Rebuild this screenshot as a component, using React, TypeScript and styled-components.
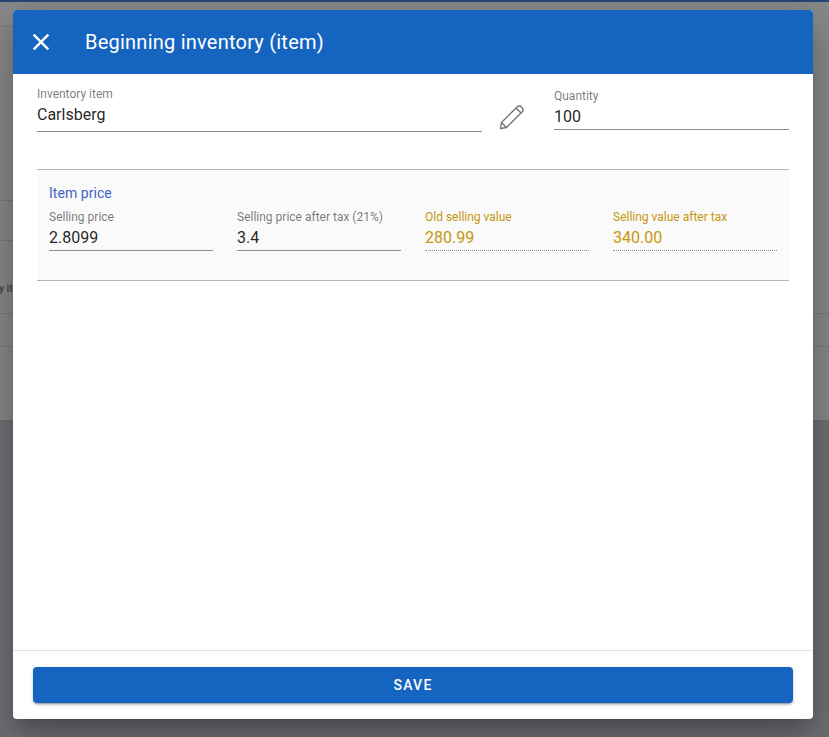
import React from 'react';
import styled, { createGlobalStyle } from 'styled-components';

const Global = createGlobalStyle`
  html, body { margin: 0; padding: 0; height: 100%; overflow: hidden; }
  body { font-family: Roboto, "Liberation Sans", sans-serif; background: #8a8a8a; }
  #root { height: 100%; }
`;

const Page = styled.div`
  position: relative;
  width: 829px;
  height: 737px;
  overflow: hidden;
  background: #8a8a8a;
`;

const Backdrop = styled.div`
  position: absolute;
  inset: 0;
  display: flex;
  flex-direction: column;
`;

const TopStrip = styled.div`
  height: 2px;
  background: #23477a;
`;

const BackdropBody = styled.div`
  height: 418px;
  background: #8a8a8a;
`;

const BackdropLine = styled.div<{ $top: number; $width?: number }>`
  position: absolute;
  left: 0;
  top: ${(p) => p.$top}px;
  width: ${(p) => (p.$width ? `${p.$width}px` : '100%')};
  height: 1px;
  background: #7a7a7a;
`;

const BackdropText = styled.span`
  position: absolute;
  left: -1px;
  top: 283px;
  font-size: 10px;
  font-weight: 700;
  color: #444a52;
  white-space: nowrap;
`;

const BackdropFoot = styled.div`
  flex: 1;
  background: #707175;
`;

const Dialog = styled.div`
  position: absolute;
  left: 13px;
  top: 10px;
  width: 800px;
  height: 709px;
  display: flex;
  flex-direction: column;
  background: #fff;
  border-radius: 4px;
  overflow: hidden;
`;

const DialogShadow = styled.div`
  position: absolute;
  left: 13px;
  top: 10px;
  width: 800px;
  height: 709px;
  border-radius: 4px;
  box-shadow: 0 11px 15px -7px rgba(0,0,0,.2), 0 24px 38px 3px rgba(0,0,0,.14), 0 9px 46px 8px rgba(0,0,0,.12);
`;

const Header = styled.header`
  flex: none;
  height: 64px;
  display: flex;
  align-items: center;
  background: #1565c0;
  color: #fff;
  padding-left: 14px;
`;

const CloseButton = styled.button`
  width: 28px;
  height: 28px;
  padding: 0;
  border: 0;
  background: none;
  color: #fff;
  display: flex;
  align-items: center;
  justify-content: center;
`;

const Title = styled.h1`
  margin: 0 0 0 30px;
  font-size: 20px;
  font-weight: 400;
  line-height: 32px;
  letter-spacing: 0.23px;
`;

const Content = styled.div`
  flex: 1;
  display: flex;
  flex-direction: column;
  padding: 0 24px;
`;

const TopRow = styled.div`
  display: flex;
  align-items: flex-start;
`;

const Field = styled.div<{ $width?: number }>`
  width: ${(p) => (p.$width ? `${p.$width}px` : 'auto')};
`;

const FieldLabel = styled.div<{ $tone?: 'gold' }>`
  font-size: 12px;
  line-height: 14px;
  color: ${(p) => (p.$tone === 'gold' ? '#c6960c' : 'rgba(0,0,0,.54)')};
`;

const FieldValue = styled.div<{ $tone?: 'gold'; $pad?: number }>`
  font-size: 16px;
  line-height: 19px;
  padding: 4px 0 ${(p) => p.$pad ?? 3}px;
  color: ${(p) => (p.$tone === 'gold' ? '#c6960c' : 'rgba(0,0,0,.87)')};
  border-bottom: 1px ${(p) => (p.$tone === 'gold' ? 'dotted' : 'solid')} ${(p) => (p.$tone === 'gold' ? 'rgba(0,0,0,.42)' : '#8c8c8c')};
`;

const ItemField = styled(Field)`
  margin-top: 13px;
`;

const QuantityField = styled(Field)`
  margin-top: 15px;
`;

const PencilButton = styled.div`
  width: 26px;
  height: 26px;
  margin: 30px 29px 0 17px;
  color: #757575;
`;

const PriceBox = styled.section`
  margin-top: 37px;
  height: 112px;
  box-sizing: border-box;
  background: #fafafa;
  border-top: 1px solid #b4b4b4;
  border-bottom: 1px solid #b4b4b4;
  padding: 15px 12px 0;
`;

const PriceTitle = styled.h2`
  margin: 0 0 8px;
  font-size: 14px;
  font-weight: 400;
  line-height: 17px;
  letter-spacing: 0.05px;
  color: #3f66c4;
`;

const PriceGrid = styled.div`
  display: grid;
  grid-template-columns: repeat(4, 164px);
  column-gap: 24px;
`;

const Footer = styled.footer`
  flex: none;
  height: 69px;
  box-sizing: border-box;
  border-top: 1px solid #e2e2e2;
  padding: 16px 20px;
`;

const SaveButton = styled.button`
  width: 100%;
  height: 36px;
  border: 0;
  border-radius: 4px;
  background: #1565c0;
  color: #fff;
  font-family: Roboto, sans-serif;
  font-size: 14px;
  font-weight: 500;
  letter-spacing: 1.25px;
  box-shadow: 0 3px 1px -2px rgba(0,0,0,.2), 0 2px 2px 0 rgba(0,0,0,.14), 0 1px 5px 0 rgba(0,0,0,.12);
`;

const prices = [
  { label: 'Selling price', value: '2.8099' },
  { label: 'Selling price after tax (21%)', value: '3.4' },
  { label: 'Old selling value', value: '280.99', tone: 'gold' as const },
  { label: 'Selling value after tax', value: '340.00', tone: 'gold' as const },
];

const backdropLines = [
  { top: 26, width: 13 },
  { top: 127, width: 2 },
  { top: 200, width: 13 },
  { top: 240, width: 13 },
  { top: 313 },
  { top: 346 },
];

export default function App() {
  return (
    <Page>
      <Global />
      <Backdrop>
        <TopStrip />
        <BackdropBody />
        <BackdropFoot />
      </Backdrop>
      {backdropLines.map((l) => (
        <BackdropLine key={l.top} $top={l.top} $width={l.width} />
      ))}
      <BackdropText>y it</BackdropText>
      <DialogShadow />
      <Dialog>
        <Header>
          <CloseButton aria-label="Close">
            <svg width="28" height="28" viewBox="0 0 24 24" fill="currentColor">
              <path d="M19 6.41 17.59 5 12 10.59 6.41 5 5 6.41 10.59 12 5 17.59 6.41 19 12 13.41 17.59 19 19 17.59 13.41 12z" />
            </svg>
          </CloseButton>
          <Title>Beginning inventory (item)</Title>
        </Header>
        <Content>
          <TopRow>
            <ItemField $width={445}>
              <FieldLabel>Inventory item</FieldLabel>
              <FieldValue $pad={7}>Carlsberg</FieldValue>
            </ItemField>
            <PencilButton>
              <svg width="26" height="26" viewBox="0 0 26 26" fill="none" stroke="currentColor" strokeWidth="1.4" strokeLinejoin="round">
                <path d="M1.5 24.5 L2.5 18.5 L18 3 Q20.5 1 22.8 3.2 Q25 5.5 23 8 L7.5 23.5 Z" />
                <path d="M17 4 L22 9" />
                <path d="M2.5 18.5 L7.5 23.5" />
              </svg>
            </PencilButton>
            <QuantityField $width={235}>
              <FieldLabel>Quantity</FieldLabel>
              <FieldValue>100</FieldValue>
            </QuantityField>
          </TopRow>
          <PriceBox>
            <PriceTitle>Item price</PriceTitle>
            <PriceGrid>
              {prices.map((p) => (
                <Field key={p.label}>
                  <FieldLabel $tone={p.tone}>{p.label}</FieldLabel>
                  <FieldValue $tone={p.tone}>{p.value}</FieldValue>
                </Field>
              ))}
            </PriceGrid>
          </PriceBox>
        </Content>
        <Footer>
          <SaveButton>SAVE</SaveButton>
        </Footer>
      </Dialog>
    </Page>
  );
}
